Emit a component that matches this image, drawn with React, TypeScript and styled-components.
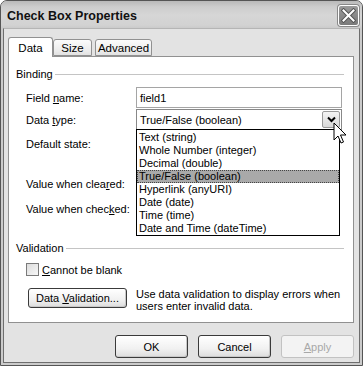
import React from "react";
import styled, { createGlobalStyle } from "styled-components";

const Global = createGlobalStyle`
  html, body { margin: 0; padding: 0; background: #fff; }
  body { font-family: "Liberation Sans", Arial, sans-serif; font-size: 11px; color: #000; }
  * { box-sizing: border-box; }
`;

const Window = styled.div`
  position: relative;
  width: 363px;
  height: 366px;
  border: 1px solid #555;
  border-radius: 7px 7px 0 0;
  background: #cbcbcb;
  display: flex;
  flex-direction: column;
  overflow: hidden;
`;

const TitleBar = styled.div`
  height: 27px;
  flex: none;
  display: flex;
  align-items: center;
  justify-content: space-between;
  padding: 0 3px 0 6px;
  background: linear-gradient(#b9b9b9 0px, #cdcdcd 6px, #d6d6d6 14px, #d2d2d2 24px, #cbcbcb 27px);
`;

const Title = styled.div`
  font-family: "Liberation Sans", Arial, sans-serif;
  font-weight: bold;
  font-size: 12.5px;
  color: #111;
  margin-top: 2px;
`;

const CloseBtn = styled.div`
  width: 21px;
  height: 21px;
  border-radius: 3px;
  border: 1px solid #fff;
  background: linear-gradient(#9a9a9a, #7a7a7a);
  box-shadow: 0 0 0 1px #888;
  display: flex;
  align-items: center;
  justify-content: center;
  margin-top: 1px;
`;

const Body = styled.div`
  flex: 1;
  margin: 0 2px 2px 2px;
  border: 1px solid #6e6e6e;
  border-top-color: #b5b5b5;
  background: #e3e3e3;
  padding: 8px 5px 0 4px;
  display: flex;
  flex-direction: column;
`;

const Tabs = styled.div`
  display: flex;
  align-items: flex-end;
  height: 19px;
  position: relative;
  z-index: 1;
`;

const Tab = styled.div<{ $active?: boolean; $w: number; $ml?: number }>`
  width: ${(p) => p.$w}px;
  margin-left: ${(p) => p.$ml ?? 0}px;
  height: ${(p) => (p.$active ? 20 : 17)}px;
  margin-bottom: ${(p) => (p.$active ? -1 : 0)}px;
  border: 1px solid #919191;
  border-bottom: ${(p) => (p.$active ? "none" : "1px solid #919191")};
  border-radius: 3px 3px 0 0;
  background: ${(p) => (p.$active ? "#fff" : "linear-gradient(#fbfbfb, #ececec 70%, #e2e2e2)")};
  display: flex;
  align-items: center;
  justify-content: center;
  padding-top: ${(p) => (p.$active ? 0 : 1)}px;
  font-size: 11.5px;
`;

const Panel = styled.div`
  height: 267px;
  border: 1px solid #919191;
  background: #fff;
  padding: 10px 11px 0 7px;
  display: flex;
  flex-direction: column;
`;

const GroupHeader = styled.div<{ $mt?: number }>`
  display: flex;
  align-items: center;
  height: 14px;
  margin-top: ${(p) => p.$mt ?? 0}px;
  font-size: 11px;
  &::after {
    content: "";
    flex: 1;
    height: 1px;
    background: #c4c4c4;
    margin-left: 2px;
    margin-top: 1px;
    margin-right: -2px;
  }
`;

const Row = styled.div<{ $mt: number }>`
  display: grid;
  grid-template-columns: 110px 1fr;
  align-items: center;
  height: 21px;
  margin-top: ${(p) => p.$mt}px;
  padding-left: 10px;
  font-size: 11px;
`;

const Field = styled.div`
  height: 21px;
  border: 1px solid #a5a5a5;
  background: #fff;
  display: flex;
  align-items: center;
  padding-left: 3px;
  font-size: 11px;
`;

const SelectBox = styled(Field)`
  border-color: #888;
  justify-content: space-between;
  padding-right: 1px;
`;

const DropBtn = styled.div`
  width: 18px;
  height: 17px;
  border: 1px solid #9a9a9a;
  border-radius: 2px;
  background: linear-gradient(#f4f4f4, #d8d8d8);
  display: flex;
  align-items: center;
  justify-content: center;
`;

const U = styled.span`
  text-decoration: underline;
  text-underline-offset: 1px;
`;

const FieldWrap = styled.div`
  position: relative;
`;

const DropList = styled.div`
  position: absolute;
  left: 0;
  top: 20px;
  width: 204px;
  border: 1px solid #000;
  background: #fff;
  padding: 1px 0 0;
  z-index: 5;
`;

const Item = styled.div<{ $sel?: boolean }>`
  height: 13px;
  line-height: 13px;
  padding-left: 2px;
  font-size: 11px;
  white-space: nowrap;
  background: ${(p) => (p.$sel ? "#a9a9a9" : "transparent")};
  outline: ${(p) => (p.$sel ? "1px dotted #444" : "none")};
  outline-offset: -1px;
`;

const CheckRow = styled.div`
  display: flex;
  align-items: center;
  gap: 3px;
  margin-top: 8px;
  padding-left: 10px;
  height: 13px;
  font-size: 11px;
`;

const CheckBox = styled.div`
  width: 13px;
  height: 13px;
  border: 1px solid #7a7a7a;
  background: linear-gradient(135deg, #dcdcdc, #f8f8f8);
`;

const ValRow = styled.div`
  display: flex;
  align-items: flex-start;
  margin-top: 12px;
  padding-left: 12px;
  gap: 9px;
`;

const Button = styled.button<{ $w: number; $h: number; $disabled?: boolean }>`
  width: ${(p) => p.$w}px;
  height: ${(p) => p.$h}px;
  flex: none;
  border: 1px solid ${(p) => (p.$disabled ? "#c2c2c2" : "#3a3a3a")};
  border-radius: 3px;
  background: ${(p) =>
    p.$disabled ? "#f3f3f3" : "linear-gradient(#ffffff, #f1f1f1 60%, #dcdcdc)"};
  color: ${(p) => (p.$disabled ? "#a8a8a8" : "#000")};
  font-family: "Liberation Sans", Arial, sans-serif;
  font-size: 11px;
  padding: 0;
  box-shadow: ${(p) => (p.$disabled ? "none" : "inset -1px -1px 0 #c8c8c8")};
`;

const Desc = styled.div`
  font-size: 11px;
  line-height: 12px;
  padding-top: 0px;
  white-space: nowrap;
`;

const Footer = styled.div`
  display: flex;
  justify-content: flex-end;
  gap: 10px;
  margin-top: 12px;
`;

const Cursor = styled.svg`
  position: absolute;
  left: 332px;
  top: 121px;
  z-index: 10;
`;

const rows = [
  "Text (string)",
  "Whole Number (integer)",
  "Decimal (double)",
  "True/False (boolean)",
  "Hyperlink (anyURI)",
  "Date (date)",
  "Time (time)",
  "Date and Time (dateTime)",
];

export default function App() {
  return (
    <>
      <Global />
      <Window>
        <TitleBar>
          <Title>Check Box Properties</Title>
          <CloseBtn>
            <svg width="15" height="15" viewBox="0 0 15 15">
              <path d="M2.5 2.5 L12.5 12.5 M12.5 2.5 L2.5 12.5" stroke="#555" strokeWidth="4" strokeLinecap="square" />
              <path d="M2.5 2.5 L12.5 12.5 M12.5 2.5 L2.5 12.5" stroke="#fff" strokeWidth="2" strokeLinecap="square" />
            </svg>
          </CloseBtn>
        </TitleBar>
        <Body>
          <Tabs>
            <Tab $active $w={45}>Data</Tab>
            <Tab $w={39}>Size</Tab>
            <Tab $w={57} $ml={3}>Advanced</Tab>
          </Tabs>
          <Panel>
            <GroupHeader>Binding</GroupHeader>
            <Row $mt={6}>
              <span>Field <U>n</U>ame:</span>
              <Field>field1</Field>
            </Row>
            <Row $mt={1}>
              <span>Data <U>t</U>ype:</span>
              <FieldWrap>
                <SelectBox>
                  <span>True/False (boolean)</span>
                  <DropBtn>
                    <svg width="9" height="7" viewBox="0 0 9 7">
                      <path d="M1 1.5 L4.5 5 L8 1.5" stroke="#000" strokeWidth="2" fill="none" />
                    </svg>
                  </DropBtn>
                </SelectBox>
                <DropList>
                  {rows.map((r) => (
                    <Item key={r} $sel={r === "True/False (boolean)"}>{r}</Item>
                  ))}
                </DropList>
              </FieldWrap>
            </Row>
            <Row $mt={3}>
              <span>Default state:</span>
              <span />
            </Row>
            <Row $mt={19}>
              <span>Value when clea<U>r</U>ed:</span>
              <span />
            </Row>
            <Row $mt={4}>
              <span>Value when chec<U>k</U>ed:</span>
              <span />
            </Row>
            <GroupHeader $mt={22}>Validation</GroupHeader>
            <CheckRow>
              <CheckBox />
              <span><U>C</U>annot be blank</span>
            </CheckRow>
            <ValRow>
              <Button $w={99} $h={20}>Data <U>V</U>alidation...</Button>
              <Desc>
                Use data validation to display errors when
                <br />
                users enter invalid data.
              </Desc>
            </ValRow>
          </Panel>
          <Footer>
            <Button $w={73} $h={23}>OK</Button>
            <Button $w={73} $h={23}>Cancel</Button>
            <Button $w={73} $h={23} $disabled><U>A</U>pply</Button>
          </Footer>
        </Body>
        <Cursor width="14" height="24" viewBox="0 0 14 24">
          <path d="M1 1 L1 18 L5 14 L8 21 L10.5 20 L7.5 13 L13 13 Z" fill="#fff" stroke="#000" strokeWidth="1" strokeLinejoin="miter" />
        </Cursor>
      </Window>
    </>
  );
}
